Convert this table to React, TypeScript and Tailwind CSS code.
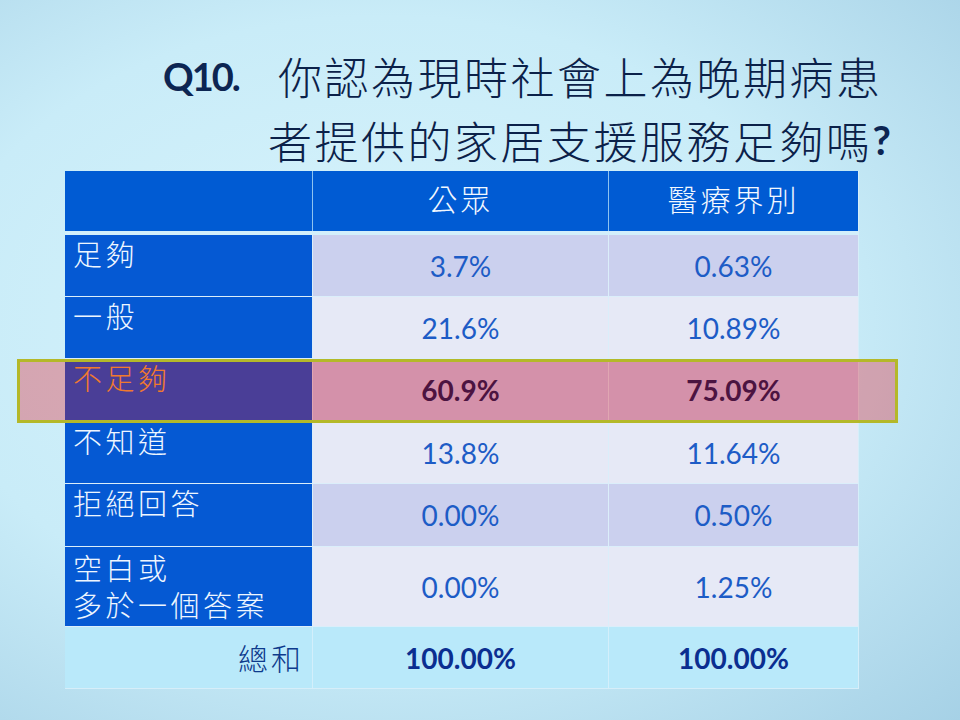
import React from 'react';

type Row = {
  label: string[];
  pub: string;
  med: string;
  bg: string;
  h: string;
  hot?: boolean;
};

const rows: Row[] = [
  { label: ['足夠'], pub: '3.7%', med: '0.63%', bg: 'bg-[#cbd0ee]', h: 'h-[62px]' },
  { label: ['一般'], pub: '21.6%', med: '10.89%', bg: 'bg-[#e6e9f6]', h: 'h-[62px]' },
  { label: ['不足夠'], pub: '60.9%', med: '75.09%', bg: 'bg-[#cbd0ee]', h: 'h-[63px]', hot: true },
  { label: ['不知道'], pub: '13.8%', med: '11.64%', bg: 'bg-[#e6e9f6]', h: 'h-[62px]' },
  { label: ['拒絕回答'], pub: '0.00%', med: '0.50%', bg: 'bg-[#cbd0ee]', h: 'h-[63px]' },
  { label: ['空白或', '多於一個答案'], pub: '0.00%', med: '1.25%', bg: 'bg-[#e6e9f6]', h: 'h-[80px]' },
];

const cjk = "font-['Noto_Sans_CJK_TC','Noto_Sans_CJK_SC',sans-serif]";
const num = "font-['Lato','Liberation_Sans',sans-serif]";

const App: React.FC = () => {
  return (
    <div className="relative w-[960px] h-[720px] overflow-hidden bg-[radial-gradient(ellipse_at_40%_45%,#d8f4fc_0%,#c9ecf8_55%,#a6d1e6_100%)]">
      {/* title */}
      <div className="h-[171px] pt-[43px] pl-[163px] text-[#0b2149]">
        <div className="flex items-center h-[66px]">
          <span className={`${num} w-[115px] text-[38px] font-bold tracking-[-2px] text-[#0c2552]`}>Q10.</span>
          <span className={`${cjk} text-[44px] font-light tracking-[2.5px] leading-none`}>你認為現時社會上為晚期病患</span>
        </div>
        <div className="flex items-center h-[62px] pl-[105px]">
          <span className={`${cjk} text-[44px] font-light tracking-[2.5px] leading-none`}>者提供的家居支援服務足夠嗎</span>
          <span className={`${num} text-[40px] font-bold text-[#0c2552]`}>?</span>
        </div>
      </div>

      {/* table */}
      <div className="ml-[65px] w-[794px] border-r border-b border-[#d6eef9]">
        <div className="grid grid-cols-[247px_296px_250px] h-[64px] bg-[#005bd3] border-b-4 border-[#d3effb]">
          <div />
          <div className={`${cjk} flex items-center justify-center pb-[6px] border-l border-[#8ec3f0] text-[30px] font-light tracking-[3px] text-[#f2f8ff]`}>公眾</div>
          <div className={`${cjk} flex items-center justify-center pb-[6px] border-l border-[#8ec3f0] text-[30px] font-light tracking-[3px] text-[#f2f8ff]`}>醫療界別</div>
        </div>

        {rows.map((r) => (
          <div key={r.label.join('')} className={`grid grid-cols-[247px_296px_250px] ${r.h} border-b border-[#dbeefa]`}>
            <div
              className={`${cjk} bg-[#0559d3] pl-[8px] text-[29px] font-light tracking-[3.5px] ${
                r.label.length > 1 ? 'pt-[2px] leading-[37px]' : 'pt-[1px] leading-[34px]'
              } ${r.hot ? 'text-[#f4ae3c]' : 'text-[#eef6ff]'}`}
            >
              {r.label.map((l, i) => (
                <React.Fragment key={l}>
                  {i > 0 && <br />}
                  {l}
                </React.Fragment>
              ))}
            </div>
            <div className={`${num} ${r.bg} flex items-center justify-center border-l border-[#dbeefa] text-[28px] ${r.hot ? 'font-bold text-[#071d58]' : 'text-[#1d5cc6]'}`}>{r.pub}</div>
            <div className={`${num} ${r.bg} flex items-center justify-center border-l border-[#dbeefa] text-[28px] ${r.hot ? 'font-bold text-[#071d58]' : 'text-[#1d5cc6]'}`}>{r.med}</div>
          </div>
        ))}

        <div className="grid grid-cols-[247px_296px_250px] h-[61px] bg-[#b9e9fa]">
          <div className={`${cjk} flex items-center justify-end pr-[8px] text-[30px] font-light tracking-[3px] text-[#0d3a8c]`}>總和</div>
          <div className={`${num} flex items-center justify-center border-l border-[#d3effb] text-[28px] font-bold text-[#0b2e90]`}>100.00%</div>
          <div className={`${num} flex items-center justify-center border-l border-[#d3effb] text-[28px] font-bold text-[#0b2e90]`}>100.00%</div>
        </div>
      </div>

      {/* highlight over the 不足夠 row */}
      <div className="pointer-events-none absolute left-[17px] top-[359px] w-[881px] h-[64px] border-[3px] border-[#b4b829] bg-[rgba(235,0,12,0.3)]" />
    </div>
  );
};

export default App;
